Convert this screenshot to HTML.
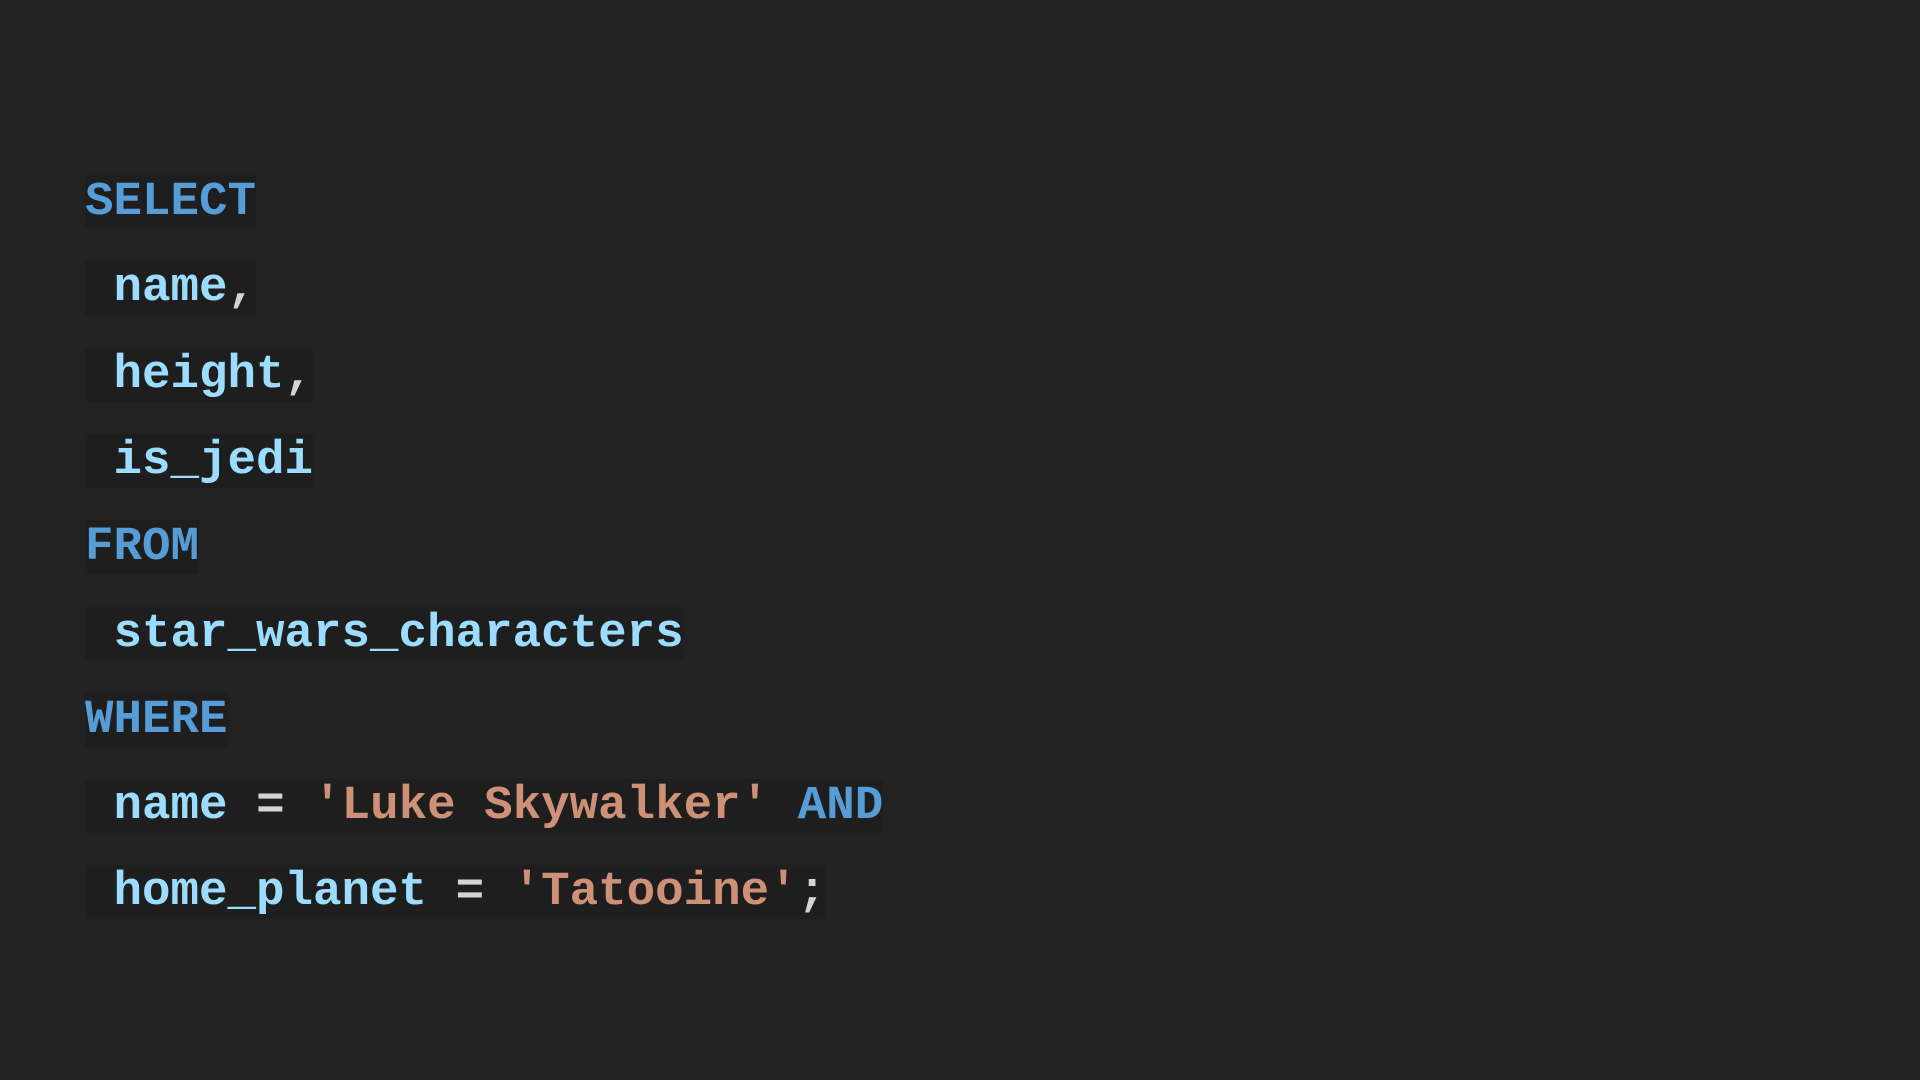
<!DOCTYPE html>
<html><head><meta charset="utf-8"><style>
html,body{margin:0;padding:0;background:#222222;width:1920px;height:1080px;overflow:hidden}
.l{position:absolute;left:85px;font-family:"Liberation Mono",monospace;font-weight:bold;font-size:47.5px;white-space:pre;line-height:normal}
.l span.b{background:#1e1e1e}
.k{color:#569cd6}.i{color:#9cdcfe}.s{color:#ce9178}.p{color:#d4d4d4}
</style></head><body>
<div class="l" style="top:175px"><span class="b"><span class="k">SELECT</span></span></div>
<div class="l" style="top:261px"><span class="b"> <span class="i">name</span><span class="p">,</span></span></div>
<div class="l" style="top:348px"><span class="b"> <span class="i">height</span><span class="p">,</span></span></div>
<div class="l" style="top:434px"><span class="b"> <span class="i">is_jedi</span></span></div>
<div class="l" style="top:520px"><span class="b"><span class="k">FROM</span></span></div>
<div class="l" style="top:607px"><span class="b"> <span class="i">star_wars_characters</span></span></div>
<div class="l" style="top:693px"><span class="b"><span class="k">WHERE</span></span></div>
<div class="l" style="top:779px"><span class="b"> <span class="i">name</span> <span class="p">=</span> <span class="s">'Luke Skywalker'</span> <span class="k">AND</span></span></div>
<div class="l" style="top:865px"><span class="b"> <span class="i">home_planet</span> <span class="p">=</span> <span class="s">'Tatooine'</span><span class="p">;</span></span></div>
</body></html>
